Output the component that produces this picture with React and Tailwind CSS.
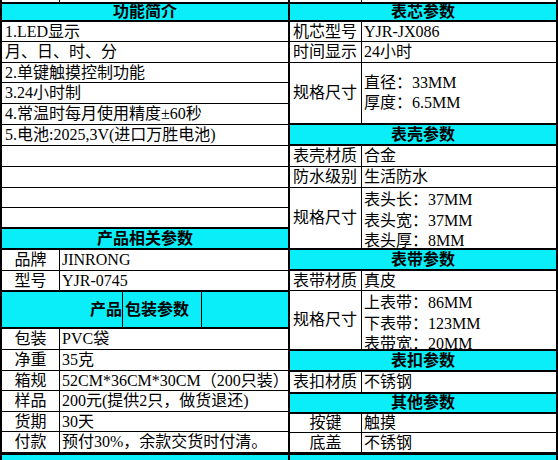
import React from "react";

// left table: label column + value column
const LRow = ({ h, label, children }) => (
  <div className={`flex ${h} border-b border-black`}>
    <div className="flex w-[58px] shrink-0 items-center justify-center border-r border-black">
      {label}
    </div>
    <div className="flex min-w-0 flex-1 items-center overflow-hidden whitespace-nowrap pl-[2px]">
      {children}
    </div>
  </div>
);

const TextRow = ({ h, children }) => (
  <div
    className={`flex ${h} items-center overflow-hidden whitespace-nowrap border-b border-black pl-[3px]`}
  >
    {children}
  </div>
);

const Header = ({ h, top, children }) => (
  <div
    className={`flex ${h} ${top} items-center justify-center border-b-2 border-black bg-[#0aeefa] font-bold`}
  >
    {children}
  </div>
);

// right table
const RRow = ({ h, label, center, children }) => (
  <div className={`flex ${h} border-b border-black`}>
    <div
      className={`flex w-[72px] shrink-0 items-center whitespace-nowrap border-r border-black ${
        center ? "justify-center" : "pl-[3px]"
      }`}
    >
      {label}
    </div>
    <div className="flex min-w-0 flex-1 items-center overflow-hidden whitespace-nowrap pl-[2px]">
      {children}
    </div>
  </div>
);

const SizeRow = ({ h, lines, top }) => (
  <div className={`flex ${h} border-b border-black`}>
    <div className="flex w-[72px] shrink-0 items-center whitespace-nowrap border-r border-black pl-[3px]">
      规格尺寸
    </div>
    <div
      className={`flex min-w-0 flex-1 flex-col overflow-hidden whitespace-nowrap pl-[2px] leading-[20.5px] ${
        top ? "justify-start pt-[2px]" : "justify-center"
      }`}
    >
      {lines.map((l) => (
        <div key={l} className="shrink-0">
          {l}
        </div>
      ))}
    </div>
  </div>
);

const LeftTable = () => (
  <div className="flex w-[290px] shrink-0 flex-col border-x-2 border-black">
    <div className="flex h-[2px]">
      <div className="w-[58px] border-r border-black" />
    </div>
    <Header h="h-[20px]" top="border-t-2">功能简介</Header>
    <TextRow h="h-[20px]">1.LED显示</TextRow>
    <TextRow h="h-[21px]">月、日、时、分</TextRow>
    <TextRow h="h-[20px]">2.单键触摸控制功能</TextRow>
    <TextRow h="h-[21px]">3.24小时制</TextRow>
    <TextRow h="h-[21px]">4.常温时每月使用精度±60秒</TextRow>
    <TextRow h="h-[21px]">5.电池:2025,3V(进口万胜电池)</TextRow>
    <TextRow h="h-[21px]" />
    <TextRow h="h-[21px]" />
    <TextRow h="h-[20px]" />
    <TextRow h="h-[20px]" />
    <Header h="h-[22px]" top="border-t">产品相关参数</Header>
    <LRow h="h-[21px]" label="品牌">JINRONG</LRow>
    <LRow h="h-[20px]" label="型号">YJR-0745</LRow>
    <div className="flex h-[38px] border-t border-b-2 border-black bg-[#0aeefa] font-bold">
      <div className="flex w-[121px] items-center justify-end border-r border-black">产品</div>
      <div className="flex w-[79px] items-center whitespace-nowrap border-r border-black pl-[2px]">
        包装参数
      </div>
      <div className="flex-1" />
    </div>
    <LRow h="h-[21px]" label="包装">PVC袋</LRow>
    <LRow h="h-[21px]" label="净重">35克</LRow>
    <LRow h="h-[20px]" label="箱规">52CM*36CM*30CM（200只装）</LRow>
    <LRow h="h-[21px]" label="样品">200元(提供2只，做货退还)</LRow>
    <LRow h="h-[20px]" label="货期">30天</LRow>
    <LRow h="h-[21px]" label="付款">预付30%，余款交货时付清。</LRow>
    <div className="h-[7px] border-t-2 border-black bg-[#0aeefa]" />
  </div>
);

const RightTable = () => (
  <div className="flex w-[268px] shrink-0 flex-col border-r-2 border-black">
    <div className="flex h-[2px]">
      <div className="w-[72px] border-r border-black" />
    </div>
    <Header h="h-[20px]" top="border-t-2">表芯参数</Header>
    <RRow h="h-[20px]" label="机芯型号">YJR-JX086</RRow>
    <RRow h="h-[21px]" label="时间显示">24小时</RRow>
    <SizeRow h="h-[61px]" lines={["直径：33MM", "厚度：6.5MM"]} />
    <Header h="h-[22px]" top="border-t">表壳参数</Header>
    <RRow h="h-[21px]" label="表壳材质">合金</RRow>
    <RRow h="h-[21px]" label="防水级别">生活防水</RRow>
    <SizeRow h="h-[61px]" top lines={["表头长：37MM", "表头宽：37MM", "表头厚：8MM"]} />
    <Header h="h-[22px]" top="border-t">表带参数</Header>
    <RRow h="h-[20px]" label="表带材质">真皮</RRow>
    <SizeRow h="h-[59px]" top lines={["上表带：86MM", "下表带：123MM", "表带宽：20MM"]} />
    <Header h="h-[22px]" top="border-t">表扣参数</Header>
    <RRow h="h-[21px]" label="表扣材质">不锈钢</RRow>
    <Header h="h-[21px]" top="border-t">其他参数</Header>
    <RRow h="h-[19px]" label="按键" center>触摸</RRow>
    <RRow h="h-[20px]" label="底盖" center>不锈钢</RRow>
    <div className="h-[7px] border-t-2 border-black bg-[#0aeefa]" />
  </div>
);

export default function App() {
  return (
    <div className="flex h-[460px] w-[558px] overflow-hidden bg-white font-['Liberation_Serif','Noto_Sans_CJK_SC',serif] text-[16px] leading-[18px] text-black">
      <LeftTable />
      <RightTable />
    </div>
  );
}
